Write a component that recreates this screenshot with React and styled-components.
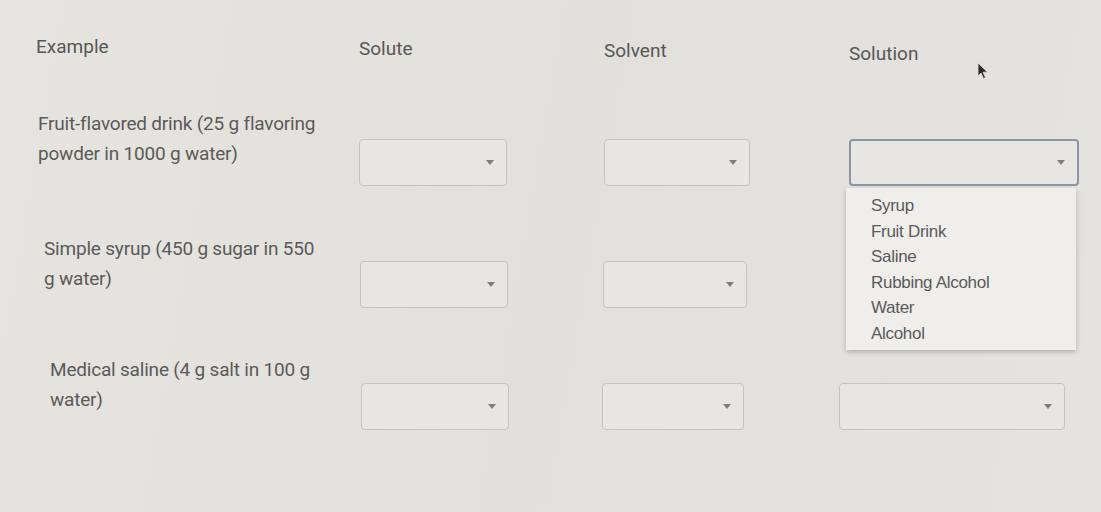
import React from "react";
import styled, { createGlobalStyle } from "styled-components";

const GlobalStyle = createGlobalStyle`
  html, body {
    margin: 0;
    padding: 0;
    background: #e3e1dc;
  }
  body {
    font-family: Roboto, "Liberation Sans", sans-serif;
    color: #5b5b5b;
  }
`;

const Page = styled.div`
  position: relative;
  width: 1101px;
  height: 512px;
  overflow: hidden;
  background: linear-gradient(100deg, #e6e4df 0%, #e2e0db 50%, #e4e3de 100%);
  box-sizing: border-box;
  padding: 35px 0 0 36px;
`;

const Table = styled.div`
  display: grid;
  grid-template-columns: 323px 245px 245px 232px;
  grid-auto-rows: auto;
`;

const HeadCell = styled.div`
  font-size: 19px;
  line-height: 24px;
  color: #575757;
  height: 74px;
  padding-top: ${(p) => p.$drop || 0}px;
  box-sizing: border-box;
`;

const RowCell = styled.div`
  position: relative;
  height: 122px;
  box-sizing: border-box;
`;

const ExampleText = styled.div`
  font-size: 19px;
  line-height: 30px;
  color: #5a5a5a;
  padding-left: ${(p) => p.$indent || 0}px;
  padding-top: ${(p) => p.$top || 0}px;
  letter-spacing: -0.2px;
  white-space: nowrap;
`;

const SelectBox = styled.div`
  margin-top: 30px;
  margin-left: ${(p) => p.$shift || 0}px;
  width: ${(p) => p.$w}px;
  height: 47px;
  box-sizing: border-box;
  border: ${(p) => (p.$active ? "2px solid #8e95a6" : "1px solid #c4c3bf")};
  border-radius: 4px;
  background: #e7e6e2;
  display: flex;
  align-items: center;
  justify-content: flex-end;
  padding-right: 12px;
`;

const Arrow = styled.span`
  width: 0;
  height: 0;
  border-left: 4px solid transparent;
  border-right: 4px solid transparent;
  border-top: 5px solid #7d7d7d;
`;

const Menu = styled.ul`
  position: absolute;
  left: -3px;
  top: 79px;
  width: 230px;
  margin: 0;
  padding: 5px 0 4px 25px;
  box-sizing: border-box;
  list-style: none;
  background: #efeeeb;
  box-shadow: 0 2px 5px rgba(0, 0, 0, 0.22);
  z-index: 2;
`;

const MenuItem = styled.li`
  font-family: "Liberation Sans", Arial, sans-serif;
  font-size: 17px;
  line-height: 25.5px;
  letter-spacing: -0.3px;
  color: #5a5a5a;
`;

const Cursor = styled.svg`
  position: absolute;
  left: 977px;
  top: 62px;
`;

function Select({ w, shift, active }) {
  return (
    <SelectBox $w={w} $shift={shift} $active={active}>
      <Arrow />
    </SelectBox>
  );
}

const rows = [
  { lines: ["Fruit-flavored drink (25 g flavoring", "powder in 1000 g water)"], indent: 2, top: 0 },
  { lines: ["Simple syrup (450 g sugar in 550", "g water)"], indent: 8, top: 3 },
  { lines: ["Medical saline (4 g salt in 100 g", "water)"], indent: 14, top: 2 },
];

const options = ["Syrup", "Fruit Drink", "Saline", "Rubbing Alcohol", "Water", "Alcohol"];

export default function App() {
  return (
    <>
      <GlobalStyle />
      <Page>
        <Table>
          <HeadCell>Example</HeadCell>
          <HeadCell $drop={2}>Solute</HeadCell>
          <HeadCell $drop={4}>Solvent</HeadCell>
          <HeadCell $drop={7}>Solution</HeadCell>

          {rows.map((r, i) => (
            <React.Fragment key={i}>
              <RowCell>
                <ExampleText $indent={r.indent} $top={r.top}>
                  {r.lines[0]}
                  <br />
                  {r.lines[1]}
                </ExampleText>
              </RowCell>
              <RowCell>
                <Select w={148} shift={i} />
              </RowCell>
              <RowCell>
                <Select w={146 - i * 2} shift={-i} />
              </RowCell>
              <RowCell>
                {i === 0 && (
                  <>
                    <Select w={230} active />
                    <Menu>
                      {options.map((o) => (
                        <MenuItem key={o}>{o}</MenuItem>
                      ))}
                    </Menu>
                  </>
                )}
                {i === 2 && <Select w={226} shift={-10} />}
              </RowCell>
            </React.Fragment>
          ))}
        </Table>
        <Cursor width="12" height="18" viewBox="0 0 12 18">
          <path d="M1 1 L1 14 L4 11 L6.5 16.5 L8.5 15.6 L6 10.2 L10.5 10.2 Z" fill="#2b2b2b" stroke="#dcdcdc" strokeWidth="0.8" />
        </Cursor>
      </Page>
    </>
  );
}
